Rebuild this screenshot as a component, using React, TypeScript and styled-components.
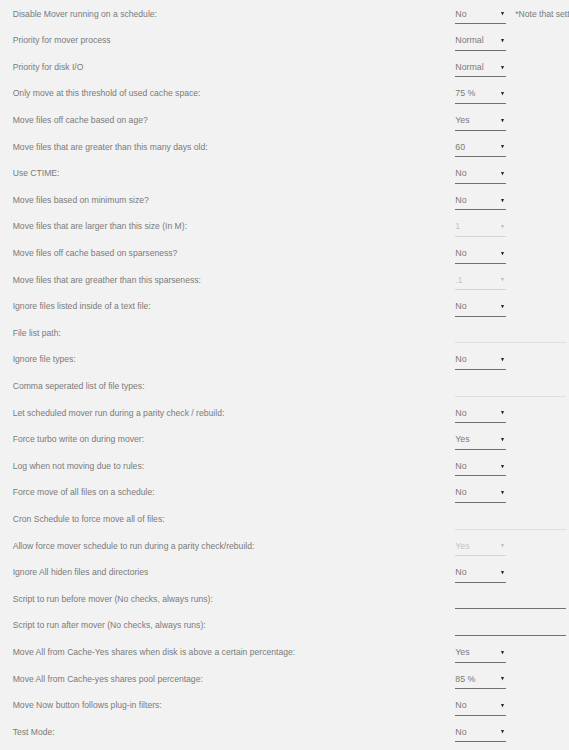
import React from "react";
import styled, { createGlobalStyle } from "styled-components";

const Global = createGlobalStyle`
  html, body {
    margin: 0;
    padding: 0;
    background: #f2f2f2;
    overflow: hidden;
  }
  body {
    font-family: "Liberation Sans", Arial, sans-serif;
  }
`;

const Form = styled.div`
  display: flex;
  flex-direction: column;
  width: 569px;
`;

const Row = styled.div`
  display: flex;
  align-items: flex-start;
  box-sizing: border-box;
  height: 26.6px;
  padding-top: 7.66px;
  white-space: nowrap;
`;

const Label = styled.div`
  box-sizing: border-box;
  flex: 0 0 455.3px;
  padding-left: 12.7px;
  font-size: 8.6px;
  line-height: 12px;
  color: #7a7a7a;
`;

const Control = styled.div`
  display: flex;
  align-items: flex-start;
  gap: 9.5px;
`;

const SelectBox = styled.div<{ $disabled?: boolean }>`
  box-sizing: content-box;
  width: 50.4px;
  height: 12px;
  padding-bottom: 3.64px;
  display: flex;
  justify-content: space-between;
  align-items: flex-start;
  font-size: 8.8px;
  line-height: 12px;
  color: ${(p) => (p.$disabled ? "#c4c4c4" : "#7a7a7a")};
  border-bottom: 1px solid ${(p) => (p.$disabled ? "#d6d6d6" : "#707070")};
`;

const Arrow = styled.svg<{ $disabled?: boolean }>`
  width: 3px;
  height: 3.5px;
  margin-top: 4.8px;
  margin-right: 1.8px;
  fill: ${(p) => (p.$disabled ? "#bdbdbd" : "#222")};
`;

const TextLine = styled.div<{ $disabled?: boolean }>`
  width: 110.4px;
  height: 12px;
  padding-bottom: 3.64px;
  border-bottom: 1px solid ${(p) => (p.$disabled ? "#dedede" : "#707070")};
`;

const Note = styled.span`
  font-size: 8.6px;
  line-height: 12px;
  color: #7a7a7a;
`;

type Item =
  | { label: string; kind: "select"; value: string; disabled?: boolean; note?: string }
  | { label: string; kind: "text"; disabled?: boolean };

const items: Item[] = [
  { label: "Disable Mover running on a schedule:", kind: "select", value: "No", note: "*Note that setting this to Yes will disable the Unraid mover schedule" },
  { label: "Priority for mover process", kind: "select", value: "Normal" },
  { label: "Priority for disk I/O", kind: "select", value: "Normal" },
  { label: "Only move at this threshold of used cache space:", kind: "select", value: "75 %" },
  { label: "Move files off cache based on age?", kind: "select", value: "Yes" },
  { label: "Move files that are greater than this many days old:", kind: "select", value: "60" },
  { label: "Use CTIME:", kind: "select", value: "No" },
  { label: "Move files based on minimum size?", kind: "select", value: "No" },
  { label: "Move files that are larger than this size (In M):", kind: "select", value: "1", disabled: true },
  { label: "Move files off cache based on sparseness?", kind: "select", value: "No" },
  { label: "Move files that are greather than this sparseness:", kind: "select", value: ".1", disabled: true },
  { label: "Ignore files listed inside of a text file:", kind: "select", value: "No" },
  { label: "File list path:", kind: "text", disabled: true },
  { label: "Ignore file types:", kind: "select", value: "No" },
  { label: "Comma seperated list of file types:", kind: "text", disabled: true },
  { label: "Let scheduled mover run during a parity check / rebuild:", kind: "select", value: "No" },
  { label: "Force turbo write on during mover:", kind: "select", value: "Yes" },
  { label: "Log when not moving due to rules:", kind: "select", value: "No" },
  { label: "Force move of all files on a schedule:", kind: "select", value: "No" },
  { label: "Cron Schedule to force move all of files:", kind: "text", disabled: true },
  { label: "Allow force mover schedule to run during a parity check/rebuild:", kind: "select", value: "Yes", disabled: true },
  { label: "Ignore All hiden files and directories", kind: "select", value: "No" },
  { label: "Script to run before mover (No checks, always runs):", kind: "text" },
  { label: "Script to run after mover (No checks, always runs):", kind: "text" },
  { label: "Move All from Cache-Yes shares when disk is above a certain percentage:", kind: "select", value: "Yes" },
  { label: "Move All from Cache-yes shares pool percentage:", kind: "select", value: "85 %" },
  { label: "Move Now button follows plug-in filters:", kind: "select", value: "No" },
  { label: "Test Mode:", kind: "select", value: "No" },
];

function Select({ value, disabled }: { value: string; disabled?: boolean }) {
  return (
    <SelectBox $disabled={disabled} role="combobox" aria-disabled={disabled}>
      <span>{value}</span>
      <Arrow $disabled={disabled} viewBox="0 0 4 4" preserveAspectRatio="none">
        <polygon points="0,0 4,0 2,4" />
      </Arrow>
    </SelectBox>
  );
}

export default function App() {
  return (
    <>
      <Global />
      <Form>
        {items.map((it, i) => (
          <Row key={i}>
            <Label>{it.label}</Label>
            <Control>
              {it.kind === "select" ? (
                <>
                  <Select value={it.value} disabled={it.disabled} />
                  {it.note && <Note>{it.note}</Note>}
                </>
              ) : (
                <TextLine $disabled={it.disabled} />
              )}
            </Control>
          </Row>
        ))}
      </Form>
    </>
  );
}
